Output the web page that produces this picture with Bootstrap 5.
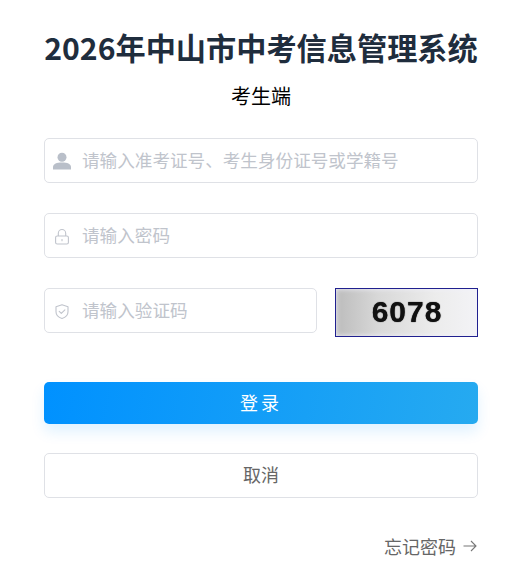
<!DOCTYPE html>
<html lang="zh-CN">
<head>
<meta charset="utf-8">
<title>登录</title>
<link href="https://cdn.jsdelivr.net/npm/bootstrap@5.3.0/dist/css/bootstrap.min.css" rel="stylesheet">
<style>
html,body{height:100%;background:#fff;}
body{font-family:"Noto Sans CJK SC","Noto Sans",sans-serif;overflow:hidden;}
.login-wrap{padding:26px 54px 0 44px;}
.login-title{font-size:30.2px;font-weight:700;color:#1f2d3d;line-height:42px;margin:0 -10px;text-align:center;white-space:nowrap;}
.login-sub{font-size:20px;font-weight:400;color:#000;text-align:center;line-height:26px;margin:15px 0 29px;}
.field{height:45px;border:1px solid #dfe1e6;border-radius:5px;background:#fff;padding-left:8px;gap:11px;}
.field svg{flex:0 0 18px;width:18px;height:18px;}
.field input{border:0;outline:0;padding:0;flex:1;min-width:0;font-size:17.6px;background:transparent;font-family:inherit;color:#606266;}
.field input::placeholder{color:#c0c4cc;opacity:1;}
.row-gap{margin-bottom:30px;}
.code-row{gap:18px;margin-bottom:45px;height:49px;}
.code-field{width:273px;flex:none;}
.captcha-box{flex:1;height:49px;border:1px solid #20208f;background:linear-gradient(90deg,#bcbcbc 0%,#d8d8d8 30%,#ececec 70%,#f3f3f6 100%);box-shadow:inset 0 0 5px #f0f0fa;font-family:"Liberation Sans",sans-serif;font-weight:700;font-size:30px;color:#111;letter-spacing:1px;padding:0 0 2px 1px;}
.captcha-box span{filter:blur(.7px);text-shadow:0 0 1px #000;}
.btn-login{height:42px;width:100%;border:0;border-radius:5px;color:#fff;font-size:18px;background:linear-gradient(100deg,#0091ff 0%,#26aaf0 100%);box-shadow:0 8px 14px rgba(0,145,255,.12);letter-spacing:3px;padding:0 0 2px;}
.btn-login:hover,.btn-login:active{color:#fff;background:linear-gradient(100deg,#0091ff 0%,#26aaf0 100%);}
.btn-cancel{height:45px;width:100%;border:1px solid #dfe1e6;border-radius:5px;color:#666;font-size:18px;background:#fff;padding:0 0 2px;margin-top:29px;}
.forgot{margin-top:35px;color:#666;font-size:18px;text-decoration:none;gap:6px;line-height:26px;}
.forgot svg{width:16px;height:16px;}
</style>
</head>
<body>
<div class="login-wrap">
  <h1 class="login-title">2026年中山市中考信息管理系统</h1>
  <div class="login-sub">考生端</div>
  <div class="field d-flex align-items-center row-gap">
    <svg viewBox="0 0 18 18"><circle cx="9" cy="5.200" r="4.500" fill="#b9bfc9"/><path d="M0 17.500v-2.500C0 11.800 3.800 10.500 9 10.500s9 1.300 9 4.500v2.500z" fill="#b9bfc9"/></svg>
    <input type="text" placeholder="请输入准考证号、考生身份证号或学籍号">
  </div>
  <div class="field d-flex align-items-center row-gap">
    <svg viewBox="0 0 18 18" fill="none" stroke="#c0c4cc" stroke-width="1.100"><rect x="2.600" y="9" width="12.800" height="8" rx="1.600"/><path d="M5.300 9V6.200a3.700 3.700 0 0 1 7.400 0V9"/><path d="M9 12.500v1.200" stroke-linecap="round"/></svg>
    <input type="password" placeholder="请输入密码">
  </div>
  <div class="d-flex align-items-start code-row">
    <div class="field d-flex align-items-center code-field">
      <svg viewBox="0 0 18 18" fill="none" stroke="#c0c4cc" stroke-width="1.100" stroke-linejoin="round"><path d="M9 2.700l6 2.100v5c0 3.500-2.600 5.700-6 6.700-3.400-1-6-3.200-6-6.700v-5z"/><path d="M6.200 9.300l2.100 2.100 3.600-3.500" stroke-linecap="round"/></svg>
      <input type="text" placeholder="请输入验证码">
    </div>
    <div class="captcha-box d-flex align-items-center justify-content-center"><span>6078</span></div>
  </div>
  <button type="button" class="btn btn-login d-block">登录</button>
  <button type="button" class="btn btn-cancel d-block">取消</button>
  <div class="d-flex justify-content-end">
    <a href="#" class="forgot d-inline-flex align-items-center">忘记密码
      <svg viewBox="0 0 16 16" fill="none" stroke="#777" stroke-width="1.100"><path d="M1.500 8h12.500M9 3l5 5-5 5"/></svg>
    </a>
  </div>
</div>
<script src="https://cdn.jsdelivr.net/npm/bootstrap@5.3.0/dist/js/bootstrap.bundle.min.js"></script>
</body>
</html>
